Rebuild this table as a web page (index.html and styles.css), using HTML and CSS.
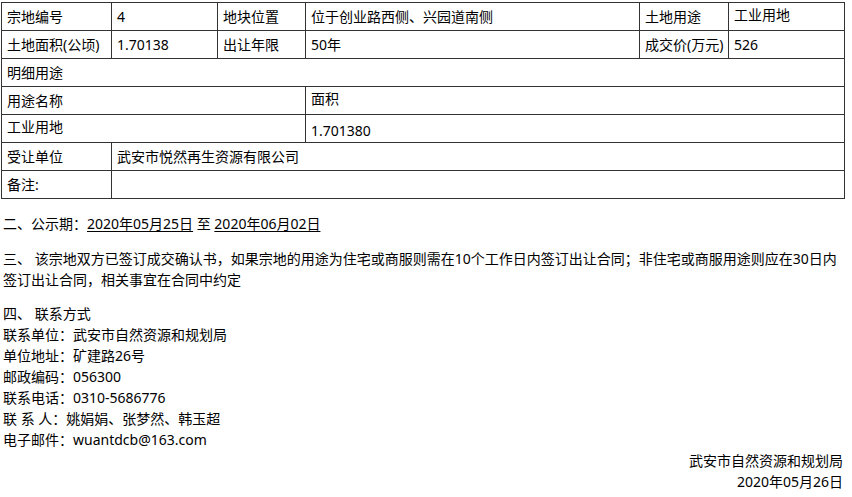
FILE: index.html
```html
<!DOCTYPE html>
<html lang="zh-CN">
<head>
  <meta charset="UTF-8" />
  <meta name="viewport" content="width=device-width, initial-scale=1.0" />
  <title>成交公示</title>
  <link rel="stylesheet" href="styles.css">
</head>
<body>
<div class="page">
  <!-- 宗地信息表 -->
  <table class="land-table">
    <colgroup>
      <col style="width:110px">
      <col style="width:106px">
      <col style="width:88px">
      <col style="width:334px">
      <col style="width:89px">
      <col style="width:116px">
    </colgroup>
    <tr>
      <td>宗地编号</td>
      <td>4</td>
      <td>地块位置</td>
      <td>位于创业路西侧、兴园道南侧</td>
      <td>土地用途</td>
      <td class="raised">工业用地</td>
    </tr>
    <tr>
      <td>土地面积(公顷)</td>
      <td>1.70138</td>
      <td>出让年限</td>
      <td>50年</td>
      <td>成交价(万元)</td>
      <td>526</td>
    </tr>
    <tr>
      <td colspan="6">明细用途</td>
    </tr>
    <tr>
      <td colspan="3">用途名称</td>
      <td colspan="3" class="raised">面积</td>
    </tr>
    <tr>
      <td colspan="3" class="raised">工业用地</td>
      <td colspan="3" class="lowered">1.701380</td>
    </tr>
    <tr>
      <td>受让单位</td>
      <td colspan="5">武安市悦然再生资源有限公司</td>
    </tr>
    <tr>
      <td>备注:</td>
      <td colspan="5"></td>
    </tr>
  </table>

  <p class="notice">二、公示期：<u>2020年05月25日</u> 至 <u>2020年06月02日</u></p>

  <p class="notice">三、 该宗地双方已签订成交确认书，如果宗地的用途为住宅或商服则需在10个工作日内签订出让合同；非住宅或商服用途则应在30日内签订出让合同，相关事宜在合同中约定</p>

  <div class="contact">
    <div>四、 联系方式</div>
    <div>联系单位：武安市自然资源和规划局</div>
    <div>单位地址：矿建路26号</div>
    <div>邮政编码：056300</div>
    <div>联系电话：0310-5686776</div>
    <div>联 系 人：姚娟娟、张梦然、韩玉超</div>
    <div>电子邮件：wuantdcb@163.com</div>
  </div>

  <div class="sign">
    <div>武安市自然资源和规划局</div>
    <div>2020年05月26日</div>
  </div>
</div>
</body>
</html>
```

FILE: styles.css
```css
/* Base */
body {
  margin: 0;
  padding: 2px 0 0 1px;
  font-family: "Noto Sans", "Noto Sans CJK SC", sans-serif;
  font-size: 14px;
  line-height: 21px;
  color: #000;
  background: #fff;
}
.page {
  width: 843px;
}

/* Table */
.land-table {
  width: 843px;
  border-collapse: collapse;
  table-layout: fixed;
}
.land-table td {
  border: 1px solid #333;
  padding: 3px 5px;
  height: 21px;
  white-space: nowrap;
  overflow: hidden;
  vertical-align: middle;
}
.land-table td.raised {
  padding-top: 1px;
  padding-bottom: 5px;
}
.land-table td.lowered {
  padding-top: 5px;
  padding-bottom: 1px;
}

/* Notices */
.notice {
  margin: 14px 0 0;
  padding-left: 2px;
}
.notice u {
  text-decoration: underline;
  text-underline-offset: 2px;
}
.contact {
  margin-top: 13px;
  padding-left: 2px;
}
.sign {
  text-align: right;
  padding-right: 1px;
}
```
